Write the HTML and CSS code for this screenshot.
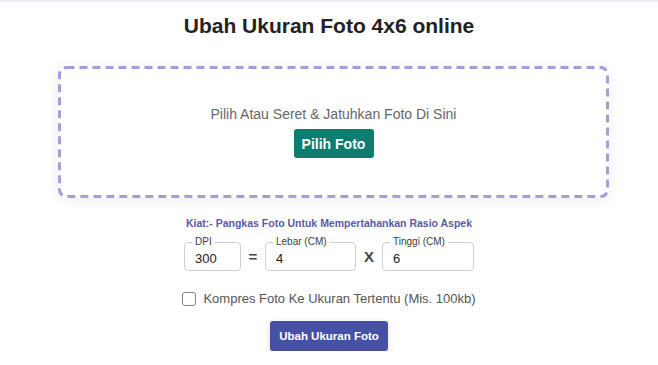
FILE: index.html
```html
<!DOCTYPE html>
<html lang="id">
<head>
    <meta charset="UTF-8">
    <meta name="viewport" content="width=device-width, initial-scale=1.0">
    <title>Ubah Ukuran Foto 4x6 online</title>
    <link rel="stylesheet" href="styles.css">
</head>
<body>

    <div class="topbar"></div>

    <main class="page">
        <h1 class="title">Ubah Ukuran Foto 4x6 online</h1>

        <div class="drop">
            <!-- garis putus-putus -->
            <svg class="drop-border" width="551" height="132" viewBox="0 0 551 132">
                <rect x="1.5" y="1.5" width="548" height="129" rx="7" ry="7"
                      fill="none" stroke="#a49fd8" stroke-width="3" stroke-dasharray="8 5"/>
            </svg>
            <p class="drop-text">Pilih Atau Seret &amp; Jatuhkan Foto Di Sini</p>
            <button class="btn-pick">Pilih Foto</button>
        </div>

        <p class="tip">Kiat:- Pangkas Foto Untuk Mempertahankan Rasio Aspek</p>

        <div class="dims">
            <div class="field field-dpi">
                <label for="dpi">DPI</label>
                <input type="text" id="dpi" value="300">
            </div>
            <span class="sign">=</span>
            <div class="field field-w">
                <label for="lebar">Lebar (CM)</label>
                <input type="text" id="lebar" value="4">
            </div>
            <span class="sign sign-x">X</span>
            <div class="field field-h">
                <label for="tinggi">Tinggi (CM)</label>
                <input type="text" id="tinggi" value="6">
            </div>
        </div>

        <label class="compress">
            <input type="checkbox" class="check">
            <span>Kompres Foto Ke Ukuran Tertentu (Mis. 100kb)</span>
        </label>

        <button class="btn-resize">Ubah Ukuran Foto</button>
    </main>

</body>
</html>
```

FILE: styles.css
```css
body {
    font-family: "Liberation Sans", Arial, sans-serif;
    background-color: #fff;
    margin: 0;
    padding: 0;
    color: #222;
}

.topbar {
    height: 2px;
    background-color: #ebebf5;
}

.title {
    margin: 12px 0 0;
    font-size: 21px;
    line-height: 24px;
    font-weight: bold;
    text-align: center;
    color: #222;
}

.drop {
    position: relative;
    width: 551px;
    height: 132px;
    box-sizing: border-box;
    margin: 28px 0 0 58px;
    border-radius: 8px;
    background-color: #fff;
    box-shadow: 0 2px 14px rgba(0, 0, 0, 0.08);
    display: flex;
    flex-direction: column;
    align-items: center;
    justify-content: center;
}

.drop-border {
    position: absolute;
    top: 0;
    left: 0;
    pointer-events: none;
}

.drop-text {
    margin: 0;
    font-size: 14px;
    line-height: 16px;
    color: #666;
}

.btn-pick {
    margin-top: 7px;
    width: 80px;
    height: 29px;
    background-color: #0e7c6f;
    color: #fff;
    border: none;
    border-radius: 3px;
    font-family: inherit;
    font-size: 14px;
    font-weight: bold;
    cursor: pointer;
}

.tip {
    margin: 18px 0 0;
    text-align: center;
    font-size: 10.5px;
    line-height: 14px;
    font-weight: bold;
    color: #5a5aa6;
}

.dims {
    display: flex;
    justify-content: center;
    margin-top: 12px;
}

.field {
    position: relative;
    height: 29px;
    box-sizing: border-box;
    border: 1px solid #cfcfcf;
    border-radius: 4px;
}

.field-dpi {
    width: 57px;
}

.field-w {
    width: 91px;
}

.field-h {
    width: 92px;
}

.field label {
    position: absolute;
    top: -7px;
    left: 7px;
    padding: 0 3px;
    background-color: #fff;
    font-size: 10px;
    line-height: 12px;
    color: #3c3c3c;
}

.field input {
    width: 100%;
    height: 100%;
    box-sizing: border-box;
    border: none;
    outline: none;
    background: transparent;
    padding: 4px 0 0 10px;
    font-family: inherit;
    font-size: 13px;
    color: #222;
}

.sign {
    width: 24px;
    text-align: center;
    font-size: 15px;
    font-weight: bold;
    line-height: 29px;
    color: #444;
}

.sign-x {
    width: 26px;
}

.compress {
    display: flex;
    justify-content: center;
    align-items: center;
    gap: 7px;
    margin-top: 20px;
    font-size: 13px;
    line-height: 16px;
    color: #555;
}

.check {
    appearance: none;
    width: 14px;
    height: 14px;
    margin: 0;
    border: 1.5px solid #858585;
    border-radius: 3px;
    background-color: #fff;
}

.btn-resize {
    display: block;
    margin: 14px auto 0;
    width: 118px;
    height: 30px;
    background-color: #4650a5;
    color: #fff;
    border: none;
    border-radius: 3px;
    box-shadow: 0 2px 6px rgba(0, 0, 0, 0.15);
    font-family: inherit;
    font-size: 11.5px;
    font-weight: bold;
    cursor: pointer;
}
```
